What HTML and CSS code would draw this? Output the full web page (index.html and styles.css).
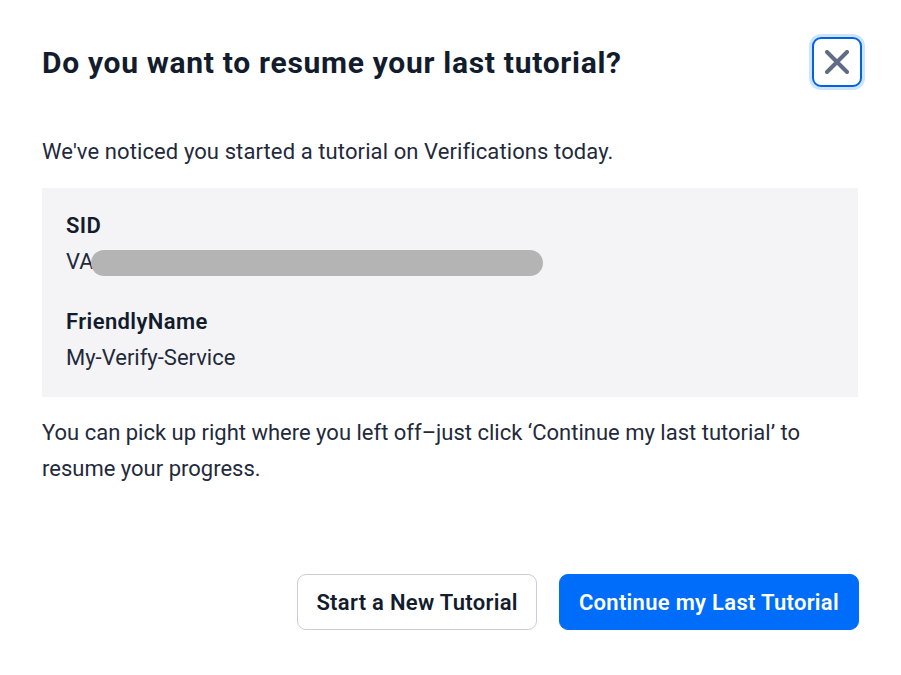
FILE: index.html
```html
<!DOCTYPE html>
<html lang="en">
<head>
  <meta charset="UTF-8" />
  <title>Resume tutorial</title>
  <link rel="stylesheet" href="styles.css">
</head>
<body>
  <div class="modal">
    <div class="modal-header">
      <h2 class="modal-title">Do you want to resume your last tutorial?</h2>
      <button class="close-button" aria-label="Close">
        <svg width="24" height="24" viewBox="0 0 24 24" fill="none">
          <path d="M2 2 L22 22 M22 2 L2 22" stroke="#606b85" stroke-width="4" stroke-linecap="round"/>
        </svg>
      </button>
    </div>

    <p class="lead">We've noticed you started a tutorial on Verifications today.</p>

    <div class="info-box">
      <div class="info-label">SID</div>
      <div class="info-value">VA<span class="redacted"></span></div>
      <div class="info-label spaced">FriendlyName</div>
      <div class="info-value">My-Verify-Service</div>
    </div>

    <p class="note">You can pick up right where you left off–just click ‘Continue my last tutorial’ to resume your progress.</p>

    <div class="modal-footer">
      <button class="btn btn-secondary">Start a New Tutorial</button>
      <button class="btn btn-primary">Continue my Last Tutorial</button>
    </div>
  </div>
</body>
</html>
```

FILE: styles.css
```css
body {
  margin: 0;
  background: #ffffff;
  font-family: Roboto, "Liberation Sans", sans-serif;
  color: #1f2a3c;
}

.modal {
  width: 816px;
  padding: 38px 42px 0 42px;
}

.modal-header {
  display: flex;
  align-items: center;
  justify-content: space-between;
  height: 48px;
  margin-right: -4px;
}

.modal-title {
  margin: 0;
  font-size: 30px;
  font-weight: 700;
  letter-spacing: 0.7px;
  color: #121c2d;
}

.close-button {
  width: 50px;
  height: 50px;
  box-sizing: border-box;
  border: 2px solid #0263e0;
  border-radius: 9px;
  background: #ffffff;
  box-shadow: 0 0 0 3px #cce4ff;
  display: flex;
  align-items: center;
  justify-content: center;
  padding: 0;
  cursor: pointer;
}

.lead {
  margin: 48px 0 0 0;
  font-size: 22px;
  line-height: 36px;
  letter-spacing: 0.1px;
}

.info-box {
  margin-top: 18px;
  background: #f4f4f6;
  padding: 20px 24px 21px 24px;
  font-size: 22px;
  line-height: 36px;
}

.info-label {
  font-weight: 600;
  letter-spacing: 0.4px;
  color: #121c2d;
}

.info-label.spaced {
  margin-top: 24px;
}

.info-value {
  position: relative;
}

/* blurred-out id value */
.redacted {
  position: absolute;
  left: 25px;
  top: 6px;
  width: 452px;
  height: 26px;
  border-radius: 13px;
  background: #b4b4b4;
}

.note {
  margin: 18px 0 0 0;
  font-size: 22px;
  line-height: 36px;
}

.modal-footer {
  display: flex;
  justify-content: flex-end;
  gap: 22px;
  margin-top: 87px;
  margin-right: -1px;
}

.btn {
  height: 56px;
  box-sizing: border-box;
  border-radius: 9px;
  font-family: inherit;
  font-size: 22px;
  font-weight: 600;
  letter-spacing: 0.3px;
  padding: 0 19px;
  cursor: pointer;
}

.btn-secondary {
  background: #ffffff;
  border: 1px solid #cacdd8;
  color: #121c2d;
  padding: 0 18px;
}

.btn-primary {
  background: #006dfa;
  border: 1px solid #006dfa;
  color: #ffffff;
}
```
